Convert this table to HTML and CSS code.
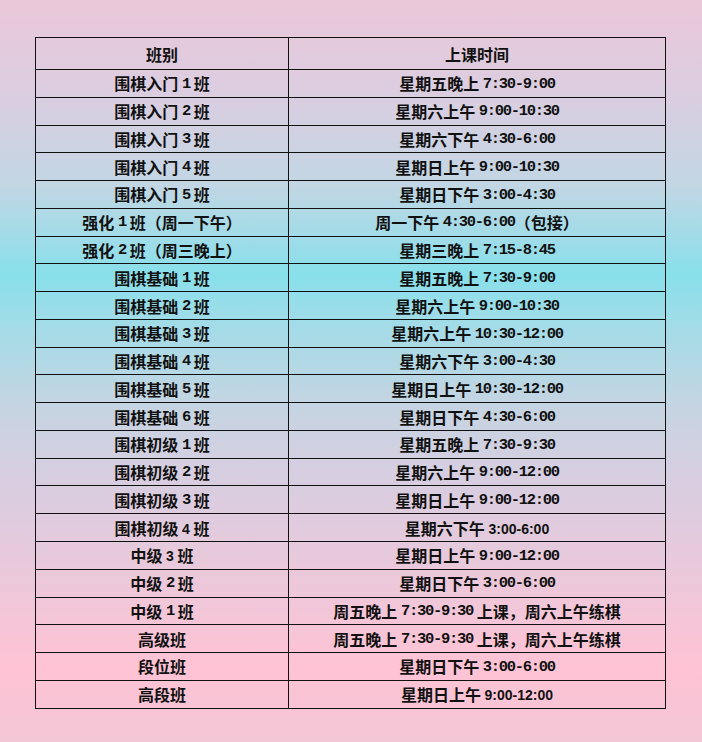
FILE: index.html
```html
<!DOCTYPE html>
<html lang="zh-CN">
<head>
<meta charset="utf-8">
<title>课程表</title>
<link rel="stylesheet" href="styles.css">
</head>
<body>
<div class="page">
  <div class="table">
    <div class="row head"><div class="cell">班别</div><div class="cell">上课时间</div></div>
    <div class="row"><div class="cell">围棋入门 <span class="n">1</span> 班</div><div class="cell">星期五晚上 <span class="n">7:30-9:00</span></div></div>
    <div class="row"><div class="cell">围棋入门 <span class="n">2</span> 班</div><div class="cell">星期六上午 <span class="n">9:00-10:30</span></div></div>
    <div class="row"><div class="cell">围棋入门 <span class="n">3</span> 班</div><div class="cell">星期六下午 <span class="n">4:30-6:00</span></div></div>
    <div class="row"><div class="cell">围棋入门 <span class="n">4</span> 班</div><div class="cell">星期日上午 <span class="n">9:00-10:30</span></div></div>
    <div class="row"><div class="cell">围棋入门 <span class="n">5</span> 班</div><div class="cell">星期日下午 <span class="n">3:00-4:30</span></div></div>
    <div class="row"><div class="cell">强化 <span class="n">1</span> 班（周一下午）</div><div class="cell">周一下午 <span class="n">4:30-6:00</span>（包接）</div></div>
    <div class="row"><div class="cell">强化 <span class="n">2</span> 班（周三晚上）</div><div class="cell">星期三晚上 <span class="n">7:15-8:45</span></div></div>
    <div class="row"><div class="cell">围棋基础 <span class="n">1</span> 班</div><div class="cell">星期五晚上 <span class="n">7:30-9:00</span></div></div>
    <div class="row"><div class="cell">围棋基础 <span class="n">2</span> 班</div><div class="cell">星期六上午 <span class="n">9:00-10:30</span></div></div>
    <div class="row"><div class="cell">围棋基础 <span class="n">3</span> 班</div><div class="cell">星期六上午 <span class="n">10:30-12:00</span></div></div>
    <div class="row"><div class="cell">围棋基础 <span class="n">4</span> 班</div><div class="cell">星期六下午 <span class="n">3:00-4:30</span></div></div>
    <div class="row"><div class="cell">围棋基础 <span class="n">5</span> 班</div><div class="cell">星期日上午 <span class="n">10:30-12:00</span></div></div>
    <div class="row"><div class="cell">围棋基础 <span class="n">6</span> 班</div><div class="cell">星期日下午 <span class="n">4:30-6:00</span></div></div>
    <div class="row"><div class="cell">围棋初级 <span class="n">1</span> 班</div><div class="cell">星期五晚上 <span class="n">7:30-9:30</span></div></div>
    <div class="row"><div class="cell">围棋初级 <span class="n">2</span> 班</div><div class="cell">星期六上午 <span class="n">9:00-12:00</span></div></div>
    <div class="row"><div class="cell">围棋初级 <span class="n">3</span> 班</div><div class="cell">星期日上午 <span class="n">9:00-12:00</span></div></div>
    <div class="row"><div class="cell">围棋初级 <span class="s">4</span> 班</div><div class="cell">星期六下午 <span class="s">3:00-6:00</span></div></div>
    <div class="row"><div class="cell">中级 <span class="s">3</span> 班</div><div class="cell">星期日上午 <span class="n">9:00-12:00</span></div></div>
    <div class="row"><div class="cell">中级 <span class="n">2</span> 班</div><div class="cell">星期日下午 <span class="n">3:00-6:00</span></div></div>
    <div class="row"><div class="cell">中级 <span class="n">1</span> 班</div><div class="cell">周五晚上 <span class="n">7:30-9:30</span> 上课，周六上午练棋</div></div>
    <div class="row"><div class="cell">高级班</div><div class="cell">周五晚上 <span class="n">7:30-9:30</span> 上课，周六上午练棋</div></div>
    <div class="row"><div class="cell">段位班</div><div class="cell">星期日下午 <span class="n">3:00-6:00</span></div></div>
    <div class="row"><div class="cell">高段班</div><div class="cell">星期日上午 <span class="s">9:00-12:00</span></div></div>
  </div>
</div>
</body>
</html>
```
FILE: styles.css
```css
html, body {
  margin: 0;
  padding: 0;
}
body {
  width: 702px;
  height: 742px;
  overflow: hidden;
  background: linear-gradient(to bottom,
    #ebc7d9 0%,
    #dccde0 12%,
    #c2d6e4 25%,
    #88e0eb 37%,
    #a6dbe7 45%,
    #c6d4e2 55%,
    #dacde0 66%,
    #ebc8da 78%,
    #ffc3d5 90%,
    #f2c6d6 100%);
  font-family: "Noto Sans CJK SC", "Noto Sans", sans-serif;
  font-weight: 700;
  font-size: 16px;
  color: #111;
}
.page {
  padding: 37px 0 0 35px;
}
.table {
  width: 631px;
  border: 1px solid #111;
  box-sizing: border-box;
}
.row {
  display: grid;
  grid-template-columns: 253px 1fr;
  height: 27.78px;
  box-sizing: border-box;
  border-top: 1px solid #111;
}
.row.head {
  height: 31px;
  border-top: none;
}
.cell {
  display: flex;
  align-items: center;
  justify-content: center;
  white-space: pre;
  line-height: 1;
}
.cell:first-child {
  border-right: 1px solid #111;
}
.n {
  font-family: "Liberation Mono", "DejaVu Sans Mono", monospace;
  font-size: 15.5px;
  font-weight: 700;
  letter-spacing: -1.3px;
  position: relative;
  top: 1px;
}
.s {
  font-family: "Liberation Sans", Arial, sans-serif;
  font-size: 14px;
  font-weight: 700;
  position: relative;
  top: 1px;
}
```
